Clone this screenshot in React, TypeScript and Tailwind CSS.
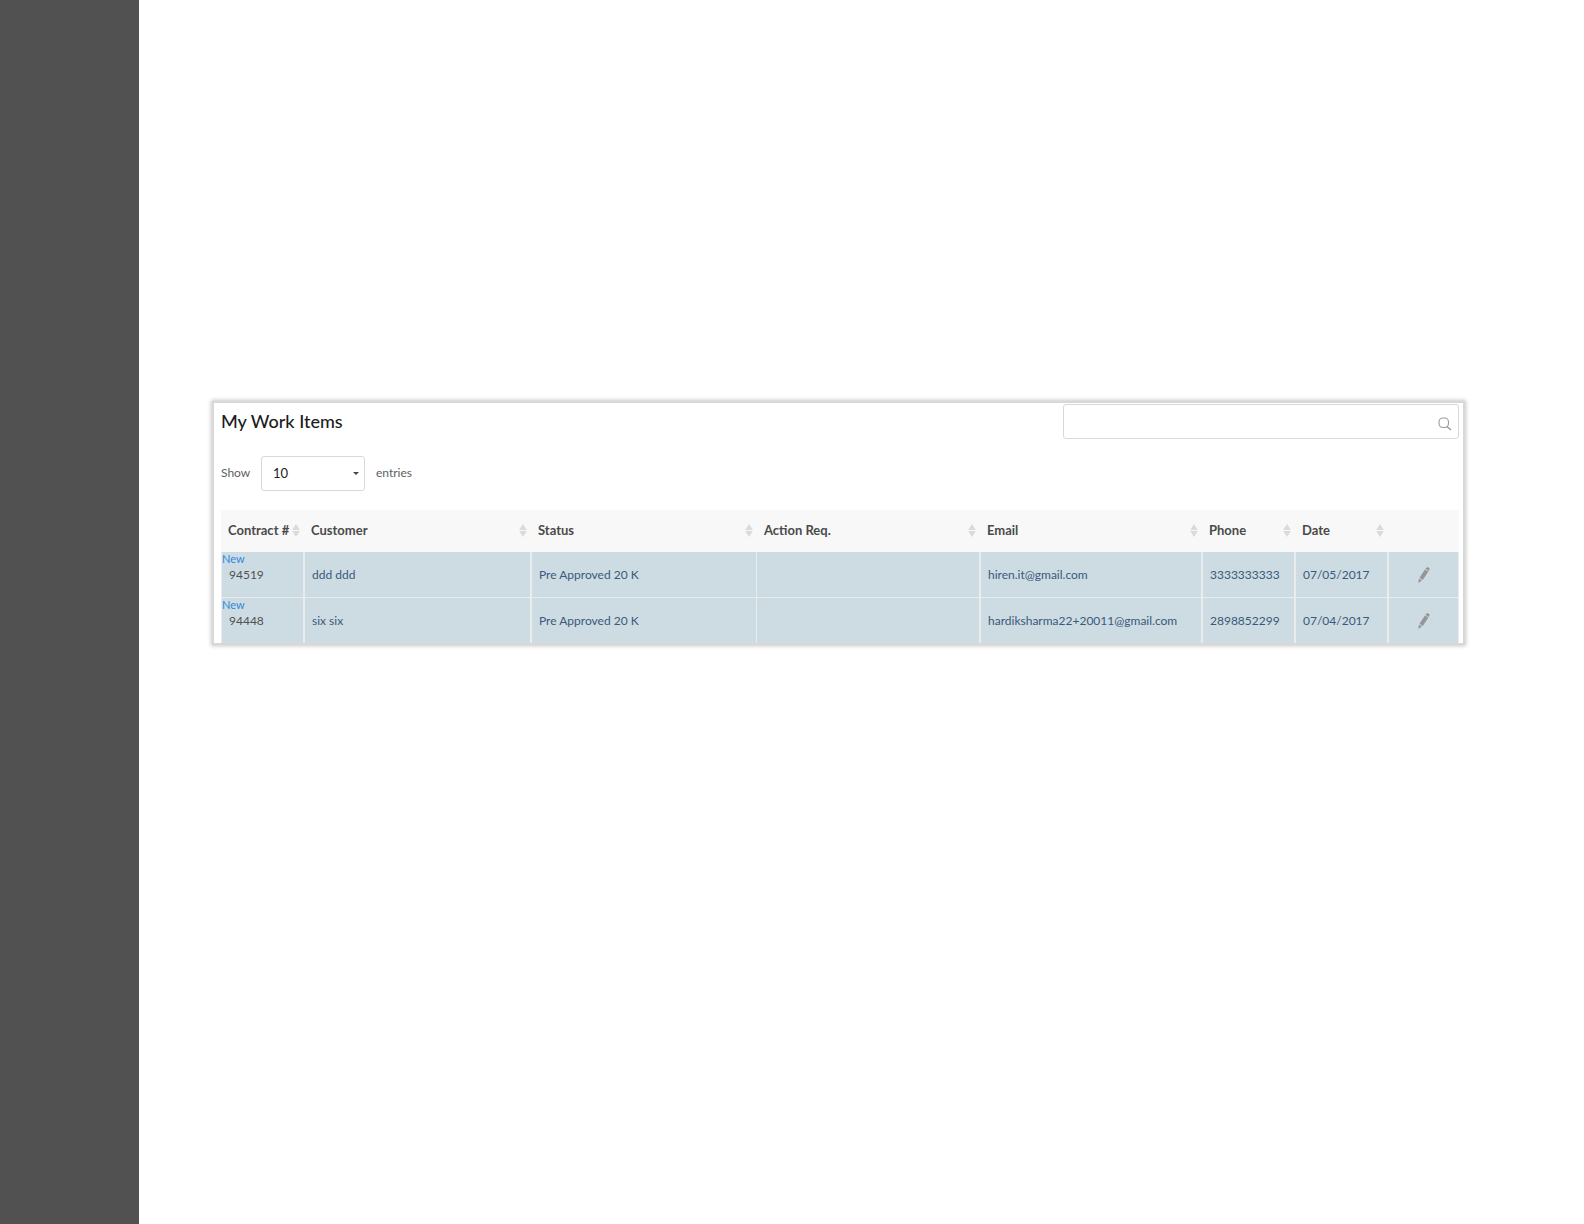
const columns = [
  { label: "Contract #", width: "w-[83px]" },
  { label: "Customer", width: "w-[227px]" },
  { label: "Status", width: "w-[226px]" },
  { label: "Action Req.", width: "w-[223px]" },
  { label: "Email", width: "w-[222px]" },
  { label: "Phone", width: "w-[93px]" },
  { label: "Date", width: "w-[93px]" },
];

const items = [
  {
    contract: "94519",
    customer: "ddd ddd",
    status: "Pre Approved 20 K",
    action: "",
    email: "hiren.it@gmail.com",
    phone: "3333333333",
    date: "07/05/2017",
  },
  {
    contract: "94448",
    customer: "six six",
    status: "Pre Approved 20 K",
    action: "",
    email: "hardiksharma22+20011@gmail.com",
    phone: "2898852299",
    date: "07/04/2017",
  },
];

const cell = "border-x border-[#e9ebec] pl-[7px] align-middle whitespace-nowrap";

function SortIcon() {
  return (
    <svg width="8" height="13" viewBox="0 0 8 13" fill="#dadada" aria-hidden="true">
      <path d="M4 0 7.8 6H.2zM4 13 .2 7h7.6z" />
    </svg>
  );
}

function SearchIcon() {
  return (
    <svg width="14" height="14" viewBox="0 0 14 14" fill="none" stroke="#999" aria-hidden="true">
      <rect x="1" y="1" width="9.5" height="9.5" rx="4" strokeWidth="1.1" />
      <path d="M9 9.5 13 13" strokeWidth="1.5" />
    </svg>
  );
}

function PencilIcon() {
  return (
    <svg width="12" height="16" viewBox="0 0 12 16" fill="#969696" aria-hidden="true">
      <path d="M8 .9Q9.3-.3 10.8.6 12 1.5 11.2 3L10.7 3.9 7.4 1.8zM6.9 2.4 10.4 4.6 4.8 12.9 1.5 10.8zM1.1 11.4 4 13.4 1 15.6Q.2 16 .3 15z" />
    </svg>
  );
}

export default function App() {
  return (
    <div className="flex min-h-screen bg-white font-[Lato,sans-serif] text-xs text-[#606060]">
      <aside className="w-[139px] shrink-0 bg-[#515151]" />
      <main className="min-w-0 flex-1 pt-[401px] pr-[119px] pb-10 pl-[73px]">
        <section className="border-2 border-[#d8d8d8] bg-white shadow-[0_0_4px_1px_#c8c8c8]">
          <div className="flex items-start justify-between pt-px pr-1 pl-[7px]">
            <h1 className="pt-[5px] text-lg leading-6 font-medium text-[#1c1c1c]">My Work Items</h1>
            <label className="relative block w-[396px]">
              <input
                type="search"
                aria-label="Search work items"
                className="block h-[35px] w-full rounded-[3px] border border-[#d9d9d9] bg-white pr-8 pl-3 outline-none"
              />
              <span className="absolute top-[13px] right-[7px]">
                <SearchIcon />
              </span>
            </label>
          </div>

          <div className="mt-[17px] flex items-center pl-[7px]">
            <label htmlFor="entries" className="w-10 pb-0.5">
              Show
            </label>
            <span className="relative block w-[104px]">
              <select
                id="entries"
                defaultValue="10"
                className="block h-[35px] w-full appearance-none rounded-[3px] border border-[#d9d9d9] bg-white px-[11px] text-[13px] text-[#222]"
              >
                <option>10</option>
                <option>25</option>
                <option>50</option>
                <option>100</option>
              </select>
              <svg
                className="pointer-events-none absolute top-4 right-1.5"
                width="6"
                height="3"
                viewBox="0 0 6 3"
                fill="#444"
                aria-hidden="true"
              >
                <path d="M0 0h6L3 3z" />
              </svg>
            </span>
            <span className="pb-0.5 pl-[11px]">entries</span>
          </div>

          <div className="mt-[19px] pr-1 pl-[7px]">
            <table className="w-full table-fixed border-separate border-spacing-0">
              <thead>
                <tr className="h-[42px] bg-[#f8f8f8] text-left text-[13px] text-[#4a4a4a]">
                  {columns.map((c) => (
                    <th key={c.label} scope="col" className={`${c.width} pr-1 pl-[7px] font-bold whitespace-nowrap`}>
                      <button type="button" className="flex w-full items-center justify-between font-bold">
                        {c.label}
                        <SortIcon />
                      </button>
                    </th>
                  ))}
                  <th className="w-[71px]" aria-label="Edit" />
                </tr>
              </thead>
              <tbody className="text-[#39597a]">
                {items.map((item, i) => (
                  <tr
                    key={item.contract}
                    className={i === 0 ? "h-[46px] bg-[#cddce3] [&>td]:border-b" : "h-[45px] bg-[#cddce3]"}
                  >
                    <td className={`${cell} relative text-[#505050]`}>
                      <span className="absolute top-0 left-0 text-[11px] leading-[14px] text-[#2f86dc]">New</span>
                      {item.contract}
                    </td>
                    <td className={cell}>{item.customer}</td>
                    <td className={cell}>{item.status}</td>
                    <td className="border-r border-[#e9ebec] pl-2 whitespace-nowrap">{item.action}</td>
                    <td className={cell}>{item.email}</td>
                    <td className={cell}>{item.phone}</td>
                    <td className={cell}>{item.date}</td>
                    <td className="border-x border-[#e9ebec]">
                      <button type="button" aria-label={`Edit ${item.contract}`} className="mx-auto block">
                        <PencilIcon />
                      </button>
                    </td>
                  </tr>
                ))}
              </tbody>
            </table>
          </div>
        </section>
      </main>
    </div>
  );
}
